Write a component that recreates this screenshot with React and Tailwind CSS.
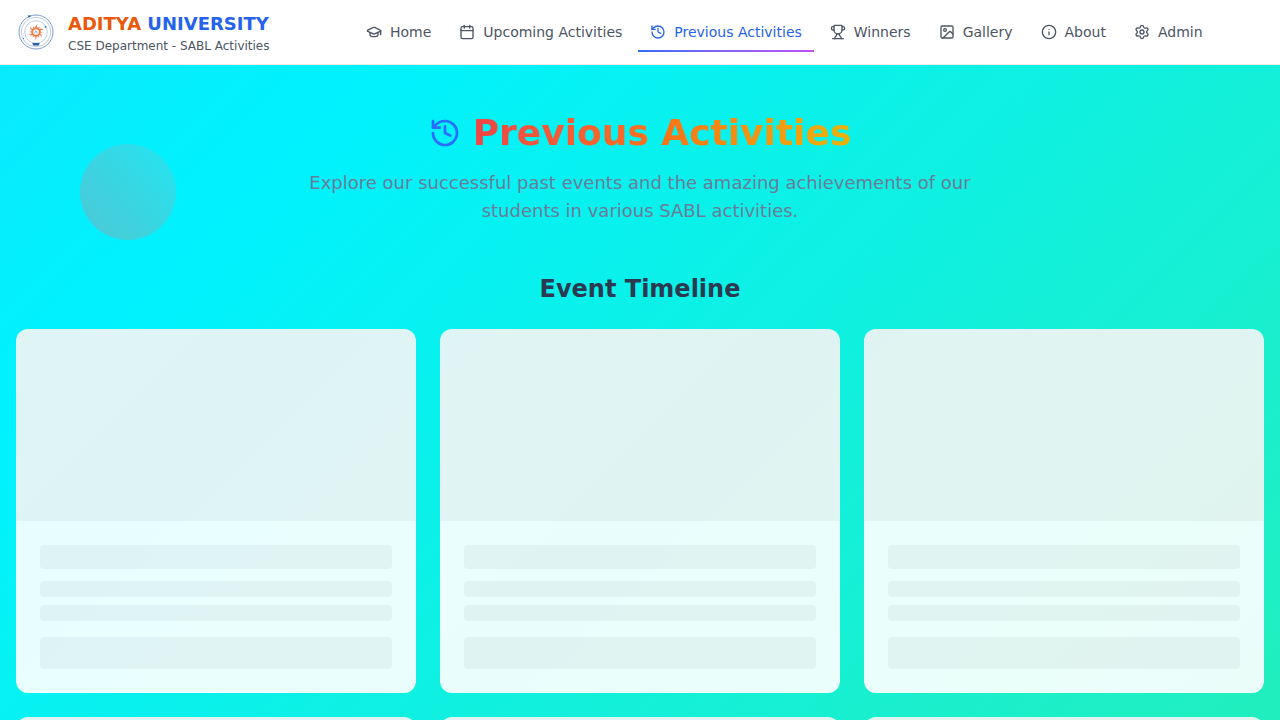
import { GraduationCap, Calendar, History, Trophy, Image, Info, Settings } from 'lucide-react'

const links = [
  { label: 'Home', icon: GraduationCap },
  { label: 'Upcoming Activities', icon: Calendar },
  { label: 'Previous Activities', icon: History, active: true },
  { label: 'Winners', icon: Trophy },
  { label: 'Gallery', icon: Image },
  { label: 'About', icon: Info },
  { label: 'Admin', icon: Settings },
]

function Logo() {
  const rays = Array.from({ length: 12 }, (_, i) => i * 30)
  return (
    <svg viewBox="0 0 40 40" className="size-10 shrink-0" role="img" aria-label="Aditya University">
      <g fill="none" stroke="#5d86bd">
        <circle cx="20" cy="20" r="17" strokeWidth="0.8" />
        <circle cx="20" cy="20" r="14.7" strokeWidth="0.6" opacity="0.7" />
        <circle cx="20" cy="20" r="11.3" strokeWidth="0.6" opacity="0.7" />
      </g>
      <circle cx="20" cy="20" r="3.7" fill="none" stroke="#f47a40" strokeWidth="1.7" />
      <g fill="#f47a40">
        {rays.map((a, i) => (
          <path
            key={a}
            d={i % 2 ? 'M19.2 16.4 Q19.2 14.4 20.8 13.4 Q20.3 15 20.9 16.4 Z' : 'M19 16.4 Q18.8 13.6 21.6 12 Q20.2 14.6 20.9 16.4 Z'}
            transform={`rotate(${a} 20 20)`}
          />
        ))}
      </g>
      <path d="M18.6 21.3 L20 18.8 L21.4 21.3" fill="none" stroke="#5d86bd" strokeWidth="0.7" />
      <g fill="#2b62a8">
        <path d="M11.8 3.6 L14.6 3.2 L14.4 5 L12.4 5.4 Z" />
        <circle cx="29.5" cy="14.8" r="0.9" />
        <circle cx="7.5" cy="26.5" r="0.6" />
        <path d="M16.3 31 L23.7 31 L22.8 33.4 L17.2 33.4 Z" />
      </g>
    </svg>
  )
}

function SkeletonCard() {
  return (
    <div className="overflow-hidden rounded-xl bg-white/91">
      <div className="h-48 bg-black/4" />
      <div className="p-6">
        <div className="mb-3 h-6 rounded bg-black/4" />
        <div className="mb-2 h-4 rounded bg-black/4" />
        <div className="mb-4 h-4 rounded bg-black/4" />
        <div className="h-8 rounded bg-black/4" />
      </div>
    </div>
  )
}

export default function App() {
  return (
    <div className="flex min-h-screen flex-col bg-white font-['DejaVu_Sans',sans-serif]">
      <header className="shrink-0 border-b border-[#efece8] bg-white px-4">
        <div className="flex h-16 items-center">
          <a href="#" className="flex items-center gap-3">
            <Logo />
            <span className="flex flex-col">
              <span className="text-lg font-bold text-[#ea580c]">
                ADITYA <span className="text-[#2563eb]">UNIVERSITY</span>
              </span>
              <span className="text-xs text-[#4b5563]">CSE Department - SABL Activities</span>
            </span>
          </a>
          <nav className="ml-[35px] flex flex-1 justify-center gap-1">
            {links.map(({ label, icon: Icon, active }) => (
              <a
                key={label}
                href="#"
                className={
                  active
                    ? 'relative flex items-center gap-2 px-3 py-2 text-sm whitespace-nowrap text-[#2563eb]'
                    : 'flex items-center gap-2 px-3 py-2 text-sm whitespace-nowrap text-[#4b5563]'
                }
              >
                <Icon className="size-4" />
                {label}
                {active && (
                  <span className="absolute inset-x-0 -bottom-0.5 h-0.5 bg-linear-to-r from-[#2b6cf5] to-[#c050f2]" />
                )}
              </a>
            ))}
          </nav>
        </div>
      </header>

      <main className="relative flex-1 bg-[linear-gradient(135deg,#09eafe_0px,#00f2fe_260px,#22eebc_1400px,#43e97b_2540px)] px-4 py-12">
        <div className="absolute top-[79px] left-20 size-24 rounded-full bg-linear-to-tr from-[#ff6470]/30 to-[#f8a0a0]/13" />
        <section className="mb-12 text-center">
          <h1 className="mb-4 flex items-center justify-center gap-3 text-4xl font-bold">
            <History className="size-8 text-[#2b6bff]" />
            <span className="bg-linear-to-r from-[#ef4444] via-[#f97316] to-[#eab308] bg-clip-text text-transparent">
              Previous Activities
            </span>
          </h1>
          <p className="mx-auto max-w-2xl text-lg text-[#6b7c98]">
            Explore our successful past events and the amazing achievements of our students in various SABL activities.
          </p>
        </section>
        <section>
          <h2 className="mb-6 text-center text-2xl font-bold text-[#2b3a50]">Event Timeline</h2>
          <div className="grid grid-cols-3 gap-6">
            {Array.from({ length: 6 }, (_, i) => (
              <SkeletonCard key={i} />
            ))}
          </div>
        </section>
      </main>
    </div>
  )
}
